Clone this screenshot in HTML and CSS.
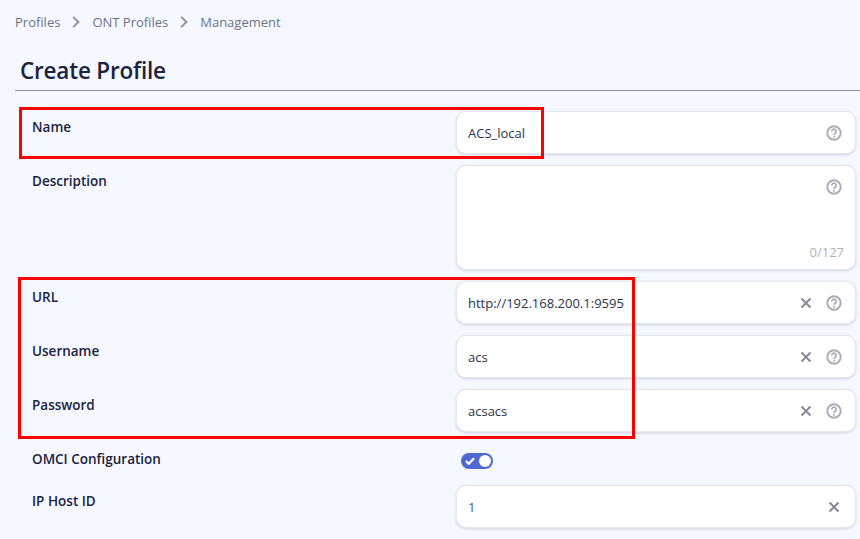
FILE: index.html
```html
<!DOCTYPE html>
<html lang="en">
<head>
<meta charset="utf-8">
<title>Create Profile</title>
<link rel="stylesheet" href="styles.css">
</head>
<body>
<svg class="defs" width="0" height="0" aria-hidden="true">
  <symbol id="help" viewBox="0 0 16 16">
    <circle cx="8" cy="8" r="6.7" fill="none" stroke="currentColor" stroke-width="1.9"/>
    <path d="M5.8 6.4a2.2 2.2 0 1 1 3.4 1.8c-.8.5-1.2.9-1.2 1.6" fill="none" stroke="currentColor" stroke-width="1.7"/>
    <circle cx="8" cy="11.8" r="1" fill="currentColor"/>
  </symbol>
  <symbol id="clear" viewBox="0 0 12 12">
    <path d="M1.5 1.5l9 9M10.5 1.5l-9 9" fill="none" stroke="currentColor" stroke-width="2.2"/>
  </symbol>
  <symbol id="chev" viewBox="0 0 8 12">
    <path d="M1.2 .8l5.2 5.2-5.2 5.2" fill="none" stroke="currentColor" stroke-width="1.9"/>
  </symbol>
</svg>
<nav class="crumbs">
  <span>Profiles</span><svg class="chev"><use href="#chev"/></svg>
  <span>ONT Profiles</span><svg class="chev"><use href="#chev"/></svg>
  <span>Management</span>
</nav>
<h1 class="title">Create Profile</h1>
<form class="form">
  <div class="row">
    <label class="label">Name</label>
    <div class="field"><span class="value">ACS_local</span><svg class="help"><use href="#help"/></svg></div>
  </div>
  <div class="row">
    <label class="label">Description</label>
    <div class="field area"><span class="value"></span><svg class="help"><use href="#help"/></svg><span class="count">0/127</span></div>
  </div>
  <div class="row">
    <label class="label">URL</label>
    <div class="field"><span class="value">http://192.168.200.1:9595</span><svg class="clear"><use href="#clear"/></svg><svg class="help"><use href="#help"/></svg></div>
  </div>
  <div class="row">
    <label class="label">Username</label>
    <div class="field"><span class="value">acs</span><svg class="clear"><use href="#clear"/></svg><svg class="help"><use href="#help"/></svg></div>
  </div>
  <div class="row">
    <label class="label">Password</label>
    <div class="field"><span class="value">acsacs</span><svg class="clear"><use href="#clear"/></svg><svg class="help"><use href="#help"/></svg></div>
  </div>
  <div class="row toggle-row">
    <label class="label">OMCI Configuration</label>
    <div class="toggle">
      <svg class="tick" viewBox="0 0 10 8"><path d="M1 4l2.8 2.8L9 1.2" fill="none" stroke="currentColor" stroke-width="2.2"/></svg>
      <span class="knob"></span>
    </div>
  </div>
  <div class="row host-row">
    <label class="label">IP Host ID</label>
    <div class="field"><span class="value num">1</span><svg class="clear solo"><use href="#clear"/></svg></div>
  </div>
</form>
<div class="mark mark-name"></div>
<div class="mark mark-acs"></div>
</body>
</html>
```
FILE: styles.css
```css
* { box-sizing: border-box; }
html, body { height: 100%; }
body {
  margin: 0;
  height: 539px;
  overflow: hidden;
  position: relative;
  background: #f5f8ff;
  color: #1c2340;
  font-family: "Open Sans", sans-serif;
  font-size: 13px;
}
.defs { position: absolute; }
.crumbs {
  display: flex;
  align-items: center;
  height: 18px;
  margin: 13px 0 0 15px;
  color: #6b7485;
  font-size: 13px;
}
.chev { width: 8px; height: 12px; margin: 0 12px; color: #8b919e; }
.title {
  margin: 16px 0 0 15px;
  padding: 5px 0 0 5px;
  height: 44px;
  line-height: 38px;
  border-bottom: 1px solid #8a8d96;
  font-size: 22.5px;
  font-weight: 600;
  letter-spacing: -.2px;
  color: #1c2340;
}
.form { margin: 20px 4px 0 32px; }
.row { display: flex; align-items: flex-start; margin-bottom: 11px; }
.label { width: 424px; flex: none; font-size: 13.5px; font-weight: 600; line-height: 18px; margin-top: 7px; }
.field {
  flex: 1;
  display: flex;
  align-items: center;
  position: relative;
  height: 43px;
  padding: 0 13px 0 11px;
  background: #fff;
  border: 1px solid #e6e7ee;
  border-radius: 10px;
  box-shadow: 0 1px 3px rgba(40, 50, 80, .18);
}
.value { flex: 1; color: #2b3348; }
.num { color: #3d5a8a; }
.help { width: 16px; height: 16px; color: #a9abb7; }
.clear { width: 12px; height: 12px; color: #8a8e9c; margin-right: 14px; }
.clear.solo { margin-right: 2px; }
.area { height: 105px; align-items: flex-start; padding-top: 13px; }
.count { position: absolute; right: 11px; bottom: 8px; font-size: 13px; color: #aeb1ba; }
.toggle-row { margin-bottom: 0; height: 42px; }
.toggle {
  position: relative;
  display: flex;
  align-items: center;
  width: 32px;
  height: 16px;
  margin: 10px 0 0 5px;
  border-radius: 8px;
  background: #5069d1;
}
.tick { width: 10px; height: 8px; margin-left: 4px; color: #fff; }
.knob {
  position: absolute;
  right: 2px;
  top: 2px;
  width: 12px;
  height: 12px;
  border-radius: 50%;
  background: #fff;
}
.mark { position: absolute; border: 3px solid #f00; pointer-events: none; }
.mark-name { left: 19px; top: 107px; width: 525px; height: 52px; }
.mark-acs { left: 18px; top: 277px; width: 617px; height: 162px; }
```
